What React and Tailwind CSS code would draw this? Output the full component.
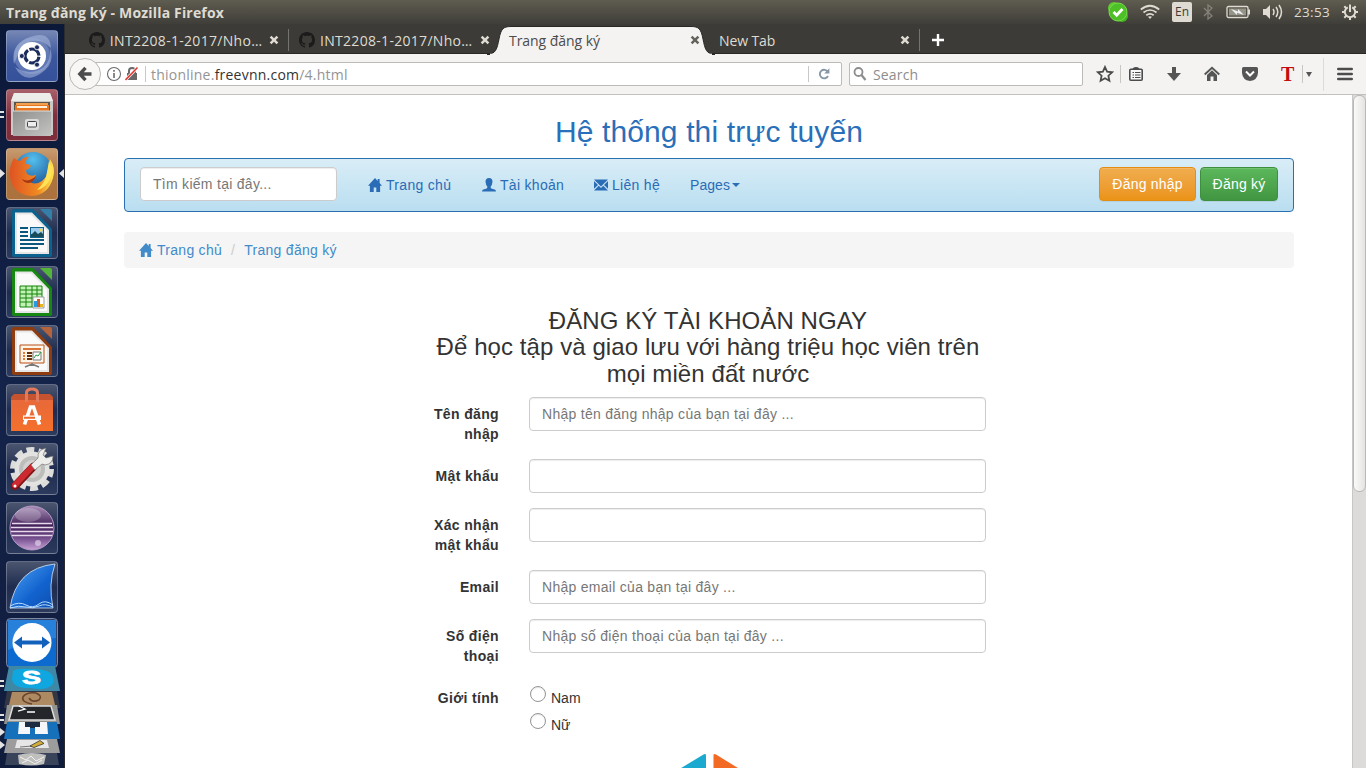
import React from 'react';

const Tile = ({ bg, children }) => (
  <div className={'relative h-[52px] w-[52px] shrink-0 overflow-hidden rounded-[4px] border border-white/25 ' + bg}>
    <svg className="block" width="50" height="50" viewBox="1 1 50 50">{children}</svg>
  </div>
);

const dark = 'bg-linear-to-b from-[#4b556f] via-[#1f2c4f] to-[#2b3a5e]';

const Cross = ({ color }) => (
  <svg width="10" height="10" viewBox="0 0 10 10" className="shrink-0">
    <path d="M1.6 1.6L8.4 8.4M8.4 1.6L1.6 8.4" stroke={color} strokeWidth="2.5" />
  </svg>
);

const Github = () => (
  <svg width="16" height="16" viewBox="0 0 16 16" className="shrink-0">
    <path fill="#1b1b1b" d="M8 0C3.58 0 0 3.58 0 8c0 3.54 2.29 6.53 5.47 7.59.4.07.55-.17.55-.38 0-.19-.01-.82-.01-1.49-2.01.37-2.53-.49-2.69-.94-.09-.23-.48-.94-.82-1.13-.28-.15-.68-.52-.01-.53.63-.01 1.08.58 1.23.82.72 1.21 1.87.87 2.33.66.07-.52.28-.87.51-1.07-1.78-.2-3.64-.89-3.64-3.95 0-.87.31-1.59.82-2.15-.08-.2-.36-1.02.08-2.12 0 0 .67-.21 2.2.82.64-.18 1.32-.27 2-.27s1.36.09 2 .27c1.53-1.04 2.2-.82 2.2-.82.44 1.1.16 1.92.08 2.12.51.56.82 1.27.82 2.15 0 3.07-1.87 3.75-3.65 3.95.29.25.54.73.54 1.48 0 1.07-.01 1.93-.01 2.2 0 .21.15.46.55.38A8.01 8.01 0 0016 8c0-4.42-3.58-8-8-8z" />
  </svg>
);

const House = () => (
  <svg width="14" height="14" viewBox="0 0 14 14" className="shrink-0" fill="currentColor">
    <path d="M7 0L0 7.700h1.900V14h3.800V9.500h2.600V14h3.800V7.700H14L11.600 5V1H9.700v2z" />
  </svg>
);

function Document({ frame, light, children }) {
  return (
    <>
      <path d="M6 4q0-2 2-2h19l19 20v26q0 2-2 2H8q-2 0-2-2z" fill={frame} />
      <path d="M9 5.500h17l17 17.500v24H9z" fill="#e6e6e6" />
      <path d="M11 7.500h14l16 16V45H11z" fill="#fafafa" />
      <path d="M34 2h10q2 0 2 2v10z" fill={light} />
      {children}
    </>
  );
}

function Launcher() {
  return (
    <aside className="relative h-[744px] w-[65px] shrink-0 overflow-hidden border-r border-[#2c2c2e] bg-linear-to-b from-[#0b1838] via-[#14234a] to-[#101c3c]">
      <div className="flex flex-col gap-[7px] pt-[6px] pl-[6px]">
        <Tile bg="bg-linear-to-b from-[#7687b4] via-[#3c579c] to-[#35519a]">
          <circle cx="26" cy="26" r="18" fill="#7d93c8" opacity=".55" />
          <path d="M8 34Q4 14 24 7T45 18Q36 9 26 11T8 34zM44 18q6 16-10 26T9 37q12 8 24 3T44 18z" fill="#a9b9df" opacity=".55" />
          <circle cx="26" cy="26" r="14" fill="#fff" />
          <circle cx="26" cy="26" r="7" fill="none" stroke="#1b2c5c" strokeWidth="3.200" strokeDasharray="13.100 1.560" strokeDashoffset="-.8" />
          <circle cx="15.800" cy="26" r="2.500" fill="#1b2c5c" stroke="#fff" strokeWidth=".8" />
          <circle cx="31" cy="17.300" r="2.500" fill="#1b2c5c" stroke="#fff" strokeWidth=".8" />
          <circle cx="31" cy="34.700" r="2.500" fill="#1b2c5c" stroke="#fff" strokeWidth=".8" />
        </Tile>
        <Tile bg="bg-linear-to-b from-[#a7606b] via-[#812f3d] to-[#7e2d3b]">
          <defs><linearGradient id="drawer" x1="0" y1="0" x2="1" y2="1"><stop offset="0" stopColor="#8f8f8d" /><stop offset="1" stopColor="#c4c4c2" /></linearGradient></defs>
          <path d="M8 4h36l3 8v34H5V12z" fill="#c9c9c7" /><path d="M8 4h36l3 8H5z" fill="#ececea" />
          <path d="M8 13h36v11H8z" fill="#5d544c" />
          <path d="M10 14h32v7H10z" fill="#f0a050" /><path d="M9 16h34v7H9z" fill="#e8751f" /><path d="M11 17h30v2H11z" fill="#fff1dc" />
          <path d="M7 22h38v25H7z" fill="url(#drawer)" /><path d="M7 22h38" stroke="#ddd" />
          <rect x="19" y="30" width="14" height="11" rx="2" fill="#d9d9d7" /><rect x="21.500" y="32.500" width="9" height="5.500" rx="1" fill="#eee" stroke="#444" />
        </Tile>
        <Tile bg="bg-linear-to-b from-[#c79a70] via-[#ad7440] to-[#ab723d]">
          <defs>
            <radialGradient id="globe" cx=".5" cy=".2" r=".8"><stop offset="0" stopColor="#54c0ed" /><stop offset="1" stopColor="#174a91" /></radialGradient>
            <linearGradient id="fox" x1="0" y1="0" x2="1" y2="0"><stop offset="0" stopColor="#df5323" /><stop offset=".65" stopColor="#f08a22" /><stop offset="1" stopColor="#ffe84f" /></linearGradient>
          </defs>
          <circle cx="27" cy="23" r="19" fill="url(#globe)" />
          <path d="M8 10q4 3 6 3 5-5 9-4-4 3-3 7 4 0 5 2-2 3-5 4 0 4 3 5 5 2 7-1-1 6-7 7 5 5 13 0 6-5 6-12l2-10q6 9 3 19-5 17-21 18Q7 47 4 29 3 18 8 10z" fill="url(#fox)" />
          <path d="M43 13q5 9 1 18-4 9-13 11 9-8 10-18z" fill="#ffe359" />
          <path d="M16 31q6 4 14-3-2 6-7 7-5 0-7-4z" fill="#a63618" />
        </Tile>
        <Tile bg={dark}><Document frame="#0c628f" light="#347eaa">
          <path d="M14 21h8M14 25h8M14 29h8M14 33h24M14 37h24M14 41h18" stroke="#0b577e" strokeWidth="2" />
          <path d="M24 20h14v11H24z" fill="#11638d" /><path d="M25 21h12v6H25z" fill="#9dcbed" /><path d="M25 28l4-4 3 3 3-2 2 2v3H25z" fill="#174c58" /><circle cx="35" cy="23" r="1.500" fill="#f6d44a" />
        </Document></Tile>
        <Tile bg={dark}><Document frame="#168811" light="#53b53a">
          <path d="M14 20h22v21H14z" fill="#c2f3b4" stroke="#16820e" /><path d="M14 24h22M14 28h22M14 32h22M14 36h22M20 20v21M26 20v21M31 20v21" stroke="#16820e" />
          <path d="M27 31h11v11H27z" fill="#fff" stroke="#999" /><path d="M28 35h3v6h-3z" fill="#299be0" /><path d="M31 33h3v8h-3z" fill="#d55b26" /><path d="M34 38h3v3h-3z" fill="#e5b520" />
        </Document></Tile>
        <Tile bg={dark}><Document frame="#8f3c10" light="#b4633c">
          <path d="M14 20h24v18H14z" fill="#fff4e8" stroke="#b85117" /><path d="M17 24h18" stroke="#d87536" strokeWidth="2" />
          <path d="M17 28h2M17 31h2M17 34h2" stroke="#e57a33" strokeWidth="2" /><path d="M21 28h5M21 31h5M21 34h5" stroke="#66320f" strokeWidth="2" />
          <path d="M27 27h8v8h-8z" fill="#fff" stroke="#777" /><path d="M28 33l2-3 2 1 3-4" stroke="#269d42" fill="none" /><path d="M26 38v3M19 42l7-3 7 3" stroke="#777" strokeWidth="1.500" fill="none" />
        </Document></Tile>
        <Tile bg={dark}>
          <defs><linearGradient id="bag" x1="0" y1="0" x2="0" y2="1"><stop offset="0" stopColor="#e8693a" /><stop offset="1" stopColor="#f4702b" /></linearGradient></defs>
          <path d="M5 13l3-3h36l3 3v5H5z" fill="#c6532f" /><path d="M5 16h42v31H5z" fill="url(#bag)" />
          <path d="M20.500 18V9q0-4 5.500-4t5.500 4v9" stroke="#e27a5c" strokeWidth="3" fill="none" />
          <path d="M18.500 40.500L24.500 23h3l6 17.500" stroke="#fff" strokeWidth="3.600" fill="none" /><path d="M17 31.500h18v4.500H17z" fill="#fff" /><path d="M18 32.800h11v2H18z" fill="#ee682a" />
        </Tile>
        <Tile bg={dark}>
          <circle cx="26" cy="26" r="18.500" fill="none" stroke="#dcdcda" strokeWidth="7" strokeDasharray="7.500 4.124" />
          <circle cx="26" cy="26" r="17.500" fill="#e2e2e0" /><circle cx="26" cy="26" r="13" fill="#bdbdbb" /><circle cx="26" cy="26" r="9" fill="#d2d2d0" />
          <path d="M9 43l18-19" stroke="#7f1515" strokeWidth="8" strokeLinecap="round" /><path d="M9 42l18-19" stroke="#cc2930" strokeWidth="6" strokeLinecap="round" />
          <path d="M25 22l7-7q-1-8 8-10l-3 7 3 3 7-2q0 8-8 9l-3-1-7 6z" fill="#ededeb" stroke="#777" strokeWidth=".7" /><circle cx="9" cy="43" r="1.500" fill="#fff" />
        </Tile>
        <Tile bg={dark}>
          <defs><linearGradient id="orb" x1="0" y1="0" x2="0" y2="1"><stop offset="0" stopColor="#a98fb8" /><stop offset=".45" stopColor="#412058" /><stop offset=".7" stopColor="#6b4585" /><stop offset="1" stopColor="#c7a2d6" /></linearGradient></defs>
          <circle cx="26" cy="26" r="22" fill="url(#orb)" stroke="#b79bc6" /><ellipse cx="22" cy="13" rx="13" ry="7" fill="#fff" opacity=".22" />
          <path d="M6 21.500h40M5 25.500h42M5 29.500h42M6 33.500h40" stroke="#e6d9ec" strokeWidth="1.300" /><circle cx="32" cy="41" r="3" fill="#efe0f5" opacity=".6" />
        </Tile>
        <Tile bg={dark}>
          <defs><linearGradient id="fin" x1="0" y1="0" x2="1" y2="1"><stop offset="0" stopColor="#4ca4f4" /><stop offset=".6" stopColor="#1262ce" /><stop offset="1" stopColor="#0d4fae" /></linearGradient></defs>
          <path d="M4 47Q10 7 49 3q-7 20-2 44z" fill="url(#fin)" stroke="#d4e7fa" strokeWidth=".8" />
          <path d="M4 45q9-5 16-1t13-1 14 1M4 47q9-3 16-1t13-1 14 1" stroke="#b7dcff" strokeWidth="1" fill="none" />
        </Tile>
      </div>
      <svg className="absolute left-0 top-[592px]" width="64" height="152" viewBox="0 616 64 152">
        <rect x="6.500" y="618.500" width="51" height="49" rx="4" fill="#304267" stroke="#7c89a5" />
        <path d="M8 620h48v46H8z" fill="#0d6bd0" /><path d="M8 620h48v18Q30 639 8 650z" fill="#3990e3" opacity=".6" />
        <circle cx="32" cy="642.500" r="19.500" fill="#fff" /><path d="M14 642.500l8-6v4h20v-4l8 6-8 6v-4H22v4z" fill="#1261bb" />
        <path d="M9 666h46l5 25H4z" fill="#3f88a5" /><path d="M13 671q3-3 19-2 19 0 21 8 3 8-6 11-7 2-16 0-18 1-19-9z" fill="#10a6df" />
        <text x="22" y="683.500" fontFamily="Liberation Sans" fontWeight="700" fontSize="18" fill="#fff" stroke="#fff" strokeWidth=".8" textLength="19" lengthAdjust="spacingAndGlyphs">S</text>
        <path d="M7 691h50l3 17H4z" fill="#333744" /><path d="M12 692h40l3 13H9z" fill="#ae8a62" />
        <path d="M32 704q-11-2-9-7 3-5 13-4 7 3 3 7-7 3-10-2" fill="none" stroke="#68432d" strokeWidth="1.500" />
        <path d="M7 705h50l3 19H4z" fill="#92928f" /><path d="M13 706h38l4 14H9z" fill="#24262a" stroke="#ddd" strokeWidth="1.500" /><path d="M19 706l6 3-7 2M27 712h8" fill="none" stroke="#fff" strokeWidth="1.300" />
        <path d="M7 722h50l3 17H4z" fill="#1670ba" /><path d="M25 722h16v6H25z" fill="#1b2b42" /><path d="M19 722h6v5h5v7H18zM47 722h-7v5h-5v7h13z" fill="#f4f6fa" />
        <path d="M7 739h50l3 14H4z" fill="#9c9c9d" /><path d="M17 740h30l2 8H15z" fill="#e6e6e6" /><path d="M20 747l12-1" stroke="#777" /><path d="M30 746l10-5.500 4 3-10 4z" fill="#d1ac38" stroke="#333" strokeWidth=".8" />
        <path d="M7 753h50l2 12H5z" fill="#39445b" /><path d="M18 755q14-4 28 0l-2 9q-12 3-25 0z" fill="#bfc0be" /><path d="M20 757l6 3 5-4 5 5 8-4M22 763l6-3 7 4 7-4" stroke="#f2f2f0" fill="none" />
        <path d="M0 681h4M0 686h4M0 715h4M0 720h4" stroke="#e3e3e3" strokeWidth="2" /><path d="M0 728l5 4-5 4zM0 741l5 4-5 4z" fill="#e3e3e3" />
      </svg>
      <svg className="absolute left-0 top-[84px]" width="64" height="70" viewBox="0 108 64 70">
        <path d="M0 112h4M0 117h4" stroke="#e3e3e3" strokeWidth="2" /><path d="M0 169l5 4.500L0 178zM64 169l-5 4.500 5 4.500z" fill="#e3e3e3" />
      </svg>
    </aside>
  );
}

function Browser() {
  return (
    <header className="font-['Open_Sans','Noto_Sans',sans-serif]">
      <div className="flex h-[30px] items-center border-b border-[#2a2926] bg-[#3c3b37]">
        <div className="flex h-[30px] w-[224px] items-center pt-[3px]">
          <span className="w-[24px]" /><Github />
          <span className="ml-[5px] w-[156px] text-[14px] tracking-[0.3px] whitespace-nowrap text-[#dfdbd2]">INT2208-1-2017/Nho…</span>
          <span className="ml-[4px]"><Cross color="#dfdbd2" /></span><span className="ml-[9px] h-[22px] w-px shrink-0 bg-[#75736d]" />
        </div>
        <div className="flex h-[30px] w-[206px] items-center pt-[3px]">
          <span className="w-[10px]" /><Github />
          <span className="ml-[5px] w-[156px] text-[14px] tracking-[0.3px] whitespace-nowrap text-[#dfdbd2]">INT2208-1-2017/Nho…</span>
          <span className="ml-[4px]"><Cross color="#dfdbd2" /></span>
        </div>
        <div className="relative flex h-[30px] w-[220px] items-center pt-[3px] text-[#4c4c4c]">
          <svg className="absolute top-0 -left-[8px]" width="236" height="31" viewBox="0 0 236 31">
            <path d="M0 30.500C9 30 10 25 12 15 14 5 16 2.500 24 2.500H204c8 0 10 2.500 12 12.500 2 10 3 15 12 15.500z" fill="#f4f3f2" stroke="#292825" strokeWidth="1" />
            <path d="M3 30.500h222" stroke="#f4f3f2" strokeWidth="1.500" />
          </svg>
          <span className="relative ml-[14px] w-[181px] text-[14px] tracking-[-0.05px] whitespace-nowrap">Trang đăng ký</span>
          <span className="relative"><Cross color="#66635e" /></span>
        </div>
        <div className="flex h-[30px] w-[188px] items-center pt-[3px] text-[#dfdbd2]">
          <span className="ml-[4px] w-[181px] text-[14px] tracking-[-0.1px] whitespace-nowrap">New Tab</span>
        </div>
        <div className="flex h-[30px] items-center pt-[3px]">
          <span className="-ml-[3px]"><Cross color="#dfdbd2" /></span><span className="ml-[9px] h-[22px] w-px bg-[#75736d]" />
          <svg className="ml-[11px]" width="14" height="14" viewBox="0 0 14 14"><path d="M7 1v12M1 7h12" stroke="#fff" strokeWidth="2.400" /></svg>
        </div>
      </div>
      <div className="flex h-[41px] items-center border-b border-[#c3c1be] bg-[#f4f3f2] pl-[4px]">
        <div className="relative z-10 flex h-[32px] w-[32px] shrink-0 items-center justify-center rounded-full border border-[#b9b7b4] bg-[#f8f7f6]">
          <svg width="16" height="16" viewBox="0 0 16 16"><path d="M8.500 1.800L2.800 8l5.700 6.200M3.500 8H14.500" stroke="#4c4c4c" strokeWidth="3.400" fill="none" /></svg>
        </div>
        <div className="-ml-[7px] flex h-[24px] w-[748px] shrink-0 items-center rounded-r-[2px] border border-[#bdbbb8] bg-white">
          <svg className="ml-[11px]" width="16" height="16" viewBox="0 0 16 16"><circle cx="8" cy="8" r="6.500" fill="none" stroke="#6a6a6a" strokeWidth="1.100" /><path d="M8 7v5M8 4v1.800" stroke="#6a6a6a" strokeWidth="1.600" /></svg>
          <svg className="ml-[3px]" width="14" height="16" viewBox="0 0 14 16"><path d="M2 7h10v7H2z" fill="#686868" /><path d="M4 7V5q0-3 3-3t3 3v2" fill="none" stroke="#686868" strokeWidth="2" /><path d="M.5 14L12.500 1.500" stroke="#fff" strokeWidth="3" /><path d="M.5 14L12.500 1.500" stroke="#df3b35" strokeWidth="1.700" /></svg>
          <span className="ml-[6px] h-[16px] w-px bg-[#c8c8c8]" />
          <span className="ml-[5px] w-[657px] text-[14px] tracking-[0.23px] text-[#949494]">thionline.<span className="text-[#333]">freevnn.com</span>/4.html</span>
          <span className="h-[16px] w-px bg-[#c8c8c8]" />
          <svg className="ml-[8px]" width="14" height="14" viewBox="0 0 14 14"><path d="M10.800 4.800A4.300 4.300 0 1011 9" stroke="#8796a5" strokeWidth="1.900" fill="none" /><path d="M12.400 1.300v5.300H7.200z" fill="#8796a5" /></svg>
        </div>
        <div className="ml-[7px] flex h-[24px] w-[234px] shrink-0 items-center rounded-[2px] border border-[#bdbbb8] bg-white">
          <svg className="ml-[3px]" width="14" height="14" viewBox="0 0 14 14"><circle cx="5.500" cy="5" r="4" stroke="#8d8d8d" strokeWidth="1.800" fill="none" /><path d="M8.500 8l4 5" stroke="#8d8d8d" strokeWidth="2.200" /></svg>
          <span className="ml-[6px] text-[14px] tracking-[0.15px] text-[#8d8d8d]">Search</span>
        </div>
        <div className="flex h-full flex-1 items-center text-[#4c4c4c]">
          <svg className="ml-[13px]" width="18" height="18" viewBox="0 0 18 18"><path d="M9 2l2.100 4.700 5 .6-3.700 3.400 1 5L9 13.200l-4.400 2.500 1-5L1.900 7.300l5-.6z" fill="none" stroke="#4c4c4c" strokeWidth="1.800" /></svg>
          <span className="ml-[6px] h-[18px] w-px bg-[#c8c6c3]" />
          <svg className="ml-[7px]" width="16" height="16" viewBox="0 0 16 16"><rect x="1.800" y="3.300" width="12.400" height="10.900" rx="1" fill="#f8f8f8" stroke="#4c4c4c" strokeWidth="1.600" /><path d="M4.500 6.500h1.500M7 6.500h5.500M4.500 9h1.500M7 9h5.500M4.500 11.500h1.500M7 11.500h5.500" stroke="#4c4c4c" strokeWidth="1.200" /><path d="M4.500 3.500q0-2.500 3.500-2.500t3.500 2.500z" fill="#4c4c4c" /></svg>
          <svg className="ml-[22px]" width="16" height="16" viewBox="0 0 16 16"><path d="M6 1h4v6h5l-7 8-7-8h5z" fill="#555" /></svg>
          <svg className="ml-[22px]" width="16" height="16" viewBox="0 0 16 16"><path d="M.7 8.500L8 1.700l7.300 6.800" fill="none" stroke="#555" strokeWidth="1.900" /><path d="M3 9l5-4.700L13 9v6H9.500v-4.500h-3V15H3z" fill="#555" /></svg>
          <svg className="ml-[22px]" width="16" height="16" viewBox="0 0 16 16"><path d="M0 2.500Q0 1 1.500 1h13Q16 1 16 2.500V7q-.5 7-8 8Q.5 14 0 7z" fill="#555" /><path d="M4 5.500l4 4 4-4" stroke="#fff" strokeWidth="2" fill="none" /></svg>
          <span className="ml-[23px] w-[14px] font-['Liberation_Serif',serif] text-[20px] leading-[20px] font-bold text-[#c50d0d]">T</span>
          <span className="ml-[7px] h-[18px] w-px bg-[#c8c6c3]" />
          <svg className="ml-[3px]" width="6" height="5"><path d="M0 0h6L3 5z" fill="#555" /></svg>
          <span className="ml-[11px] h-[33px] w-px bg-[#dddbd8]" />
          <svg className="ml-[13px]" width="16" height="14" viewBox="0 0 16 14"><path d="M1.300 2h13.400M1.300 7h13.400M1.300 12h13.400" stroke="#4c4c4c" strokeWidth="2.600" strokeLinecap="round" /></svg>
        </div>
      </div>
    </header>
  );
}

const Input = ({ placeholder }) => (
  <input placeholder={placeholder} className="block h-[34px] w-[457px] rounded-[4px] border border-[#ccc] bg-white px-[12px] text-[14px] tracking-[0.28px] shadow-[inset_0_1px_1px_rgba(0,0,0,0.075)] outline-none placeholder:text-[#777] placeholder:opacity-100" />
);

const Row = ({ label, children }) => (
  <div className="mb-[15px] flex">
    <label className="mr-[30px] w-[83px] pt-[7px] text-right leading-[20px] font-bold tracking-[0.35px]">{label}</label>
    {children}
  </div>
);

const Radio = ({ label }) => (
  <label className="flex h-[27px] items-start pt-[4px]">
    <span className="mt-[1px] ml-[1px] h-[16px] w-[16px] rounded-full border border-[#949494] bg-white shadow-[inset_0_1px_1px_rgba(0,0,0,0.1)]" />
    <span className="ml-[5px] pt-[3px] leading-[20px]">{label}</span>
  </label>
);

function Page() {
  return (
    <main className="h-[673px] w-[1287px] shrink-0 overflow-hidden bg-white pl-[59px] font-['Liberation_Sans',Arial,sans-serif] text-[14px] leading-[20px] text-[#333]">
      <div className="w-[1170px]">
        <h2 className="pt-[20px] pb-[10px] text-center text-[30px] leading-[33px] tracking-[0.13px] text-[#2a6fb9]">Hệ thống thi trực tuyến</h2>
        <nav className="mb-[20px] flex h-[54px] items-start rounded-[4px] border border-[#2a6fb0] bg-linear-to-b from-[#d9edf7] to-[#b9def0] pt-[8px] pr-[15px] pl-[15px] text-[#2a6cb5]">
          <input placeholder="Tìm kiếm tại đây..." className="h-[34px] w-[197px] rounded-[4px] border border-[#ccc] bg-white px-[12px] text-[14px] tracking-[0.28px] shadow-[inset_0_1px_1px_rgba(0,0,0,0.075)] outline-none placeholder:text-[#777] placeholder:opacity-100" />
          <div className="flex items-center pt-[8px] pl-[31px] tracking-[0.3px] whitespace-nowrap">
            <span className="flex w-[114px] items-center gap-[4px]"><House />Trang chủ</span>
            <span className="flex w-[112px] items-center gap-[4px]"><svg width="14" height="14" viewBox="0 0 14 14" fill="currentColor"><path d="M3.500 3.800Q3.500 0 7 0t3.500 3.800Q10.200 7 8.700 8.500v1.200q.5 1 3.300 1.600 2 .5 2 2.200H0q0-1.700 2-2.200 2.800-.6 3.300-1.600V8.500Q3.800 7 3.500 3.800z" /></svg>Tài khoản</span>
            <span className="flex w-[96px] items-center gap-[4px]"><svg width="14" height="14" viewBox="0 0 14 14" fill="currentColor"><path d="M0 1.500h14L7 8.500zM0 3L4 7 0 10.800zM14 3L10 7 14 10.800zM0 12.500l4.800-4.700L7 10l2.200-2.200L14 12.500z" /></svg>Liên hệ</span>
            <span className="flex items-center gap-[2px] tracking-[0.05px]">Pages<svg width="8" height="4"><path d="M0 0h8L4 4z" fill="currentColor" /></svg></span>
          </div>
          <div className="ml-auto flex gap-[4px] tracking-[0.2px] text-white [text-shadow:0_-1px_0_rgba(0,0,0,0.2)]">
            <button className="h-[34px] w-[97px] rounded-[4px] border border-[#e38d13] bg-linear-to-b from-[#f0ad4e] to-[#eb9316] shadow-[inset_0_1px_0_rgba(255,255,255,0.15),0_1px_1px_rgba(0,0,0,0.075)]">Đăng nhập</button>
            <button className="h-[34px] w-[78px] rounded-[4px] border border-[#3e8f3e] bg-linear-to-b from-[#5cb85c] to-[#419641] shadow-[inset_0_1px_0_rgba(255,255,255,0.15),0_1px_1px_rgba(0,0,0,0.075)]">Đăng ký</button>
          </div>
        </nav>
        <div className="flex h-[36px] items-center rounded-[4px] bg-[#f5f5f5] px-[15px] tracking-[0.28px] text-[#428bca]">
          <House /><span className="ml-[4px]">Trang chủ</span><span className="mx-[9px] text-[#ccc]">/</span><span>Trang đăng ký</span>
        </div>
        <div className="ml-[291px] w-[586px] pt-[40px]">
          <h3 className="pb-[10px] text-center text-[24px] leading-[26.400px] tracking-[0.08px]">ĐĂNG KÝ TÀI KHOẢN NGAY<br />Để học tập và giao lưu với hàng triệu học viên trên<br />mọi miền đất nước</h3>
          <div className="pl-[1px]">
            <Row label="Tên đăng nhập"><Input placeholder="Nhập tên đăng nhập của bạn tại đây ..." /></Row>
            <Row label="Mật khẩu"><Input /></Row>
            <Row label={<>Xác nhận<br />mật khẩu</>}><Input /></Row>
            <Row label="Email"><Input placeholder="Nhập email của bạn tại đây ..." /></Row>
            <Row label={<>Số điện<br />thoại</>}><Input placeholder="Nhập số điện thoại của bạn tại đây ..." /></Row>
            <Row label="Giới tính"><div><Radio label="Nam" /><Radio label="Nữ" /></div></Row>
          </div>
          <svg className="mt-[18px] ml-[255px] block" width="76" height="24" viewBox="0 0 76 24"><path d="M7 17.500L33.500 1.500q2.500-1.300 2.500 1V24H0z" fill="#1ba9cf" /><path d="M43.500 2.500q0-2.300 2.500-1L72 17.500l4 6.500H43.500z" fill="#f26a24" /></svg>
        </div>
      </div>
    </main>
  );
}

export default function App() {
  return (
    <div className="h-[768px] w-[1366px] overflow-hidden bg-white">
      <div className="flex h-[24px] items-center bg-linear-to-b from-[#5f5c50] to-[#3f3e39] pl-[6px] font-['Open_Sans','Noto_Sans',sans-serif] text-[#dfdbd2]">
        <span className="text-[14px] font-bold tracking-[0.17px] whitespace-nowrap">Trang đăng ký - Mozilla Firefox</span>
        <div className="ml-auto flex items-center pr-[7px]">
          <svg width="22" height="22" viewBox="0 0 22 22"><circle cx="7" cy="7" r="6" fill="#5fc932" /><circle cx="15" cy="15" r="6" fill="#43b51f" /><circle cx="11" cy="11" r="9" fill="#4dbf27" stroke="#77dc4c" /><path d="M6.500 11l3.200 3.200L15.500 8" stroke="#fff" strokeWidth="2.800" fill="none" /></svg>
          <svg className="ml-[11px]" width="20" height="16" viewBox="0 0 20 16"><path d="M.8 5.500q9.200-7.500 18.400 0M3.500 8.500q6.500-5 13 0M6.300 11.300q3.700-2.800 7.400 0" stroke="#dfdbd2" strokeWidth="1.700" fill="none" /><path d="M8 12.700q2-1 4 0L10 15z" fill="#dfdbd2" /></svg>
          <span className="ml-[12px] flex h-[20px] w-[20px] items-center justify-center rounded-[2px] bg-[#dfdbd2] text-[12px] text-[#3c3b37]">En</span>
          <svg className="ml-[11px]" width="10" height="16" viewBox="0 0 10 16"><path d="M1 4l8 8-4 3V1l4 3-8 8" stroke="#85827b" strokeWidth="1.300" fill="none" /></svg>
          <svg className="ml-[13px]" width="25" height="14" viewBox="0 0 25 14"><rect x="1" y="1.500" width="21" height="11" rx="1.500" fill="none" stroke="#dfdbd2" strokeWidth="1.300" /><path d="M3 3.500h17v7H3z" fill="#969389" /><path d="M23 4.500v5" stroke="#dfdbd2" strokeWidth="2" /><path d="M5 4l7 2.500V4l6 6-7-2.200V10z" fill="#eee" /></svg>
          <svg className="ml-[11px]" width="21" height="18" viewBox="0 0 21 18"><path d="M1 6h3l4-4v14l-4-4H1z" fill="#dfdbd2" /><path d="M11 6q2 3 0 6M14 4q3.500 5 0 10M17 2q5 7 0 14" stroke="#dfdbd2" strokeWidth="1.500" fill="none" /></svg>
          <span className="ml-[11px] w-[38px] text-[13.500px] tracking-[0.3px]">23:53</span>
          <svg className="ml-[9px]" width="18" height="18" viewBox="0 0 18 18"><path d="M6.800 4.300a5.200 5.200 0 104.400 0" stroke="#dfdbd2" strokeWidth="2" fill="none" /><path d="M9 1.500V9M1 9h3M14 9h3M3.300 14.700l2.200-2.200M14.700 14.700l-2.200-2.200M9 14v3M3.300 3.300l2 2M14.700 3.300l-2 2" stroke="#dfdbd2" strokeWidth="2" /></svg>
        </div>
      </div>
      <div className="flex">
        <Launcher />
        <div className="w-[1301px] shrink-0">
          <Browser />
          <div className="flex">
            <Page />
            <div className="h-[673px] w-[14px] border-l border-[#c9c7c4] bg-[#dddbd9]">
              <div className="h-[397px] w-[13px] rounded-[6px] border border-[#bab8b5] bg-linear-to-r from-[#fafafa] to-[#e6e4e2]" />
            </div>
          </div>
        </div>
      </div>
    </div>
  );
}
